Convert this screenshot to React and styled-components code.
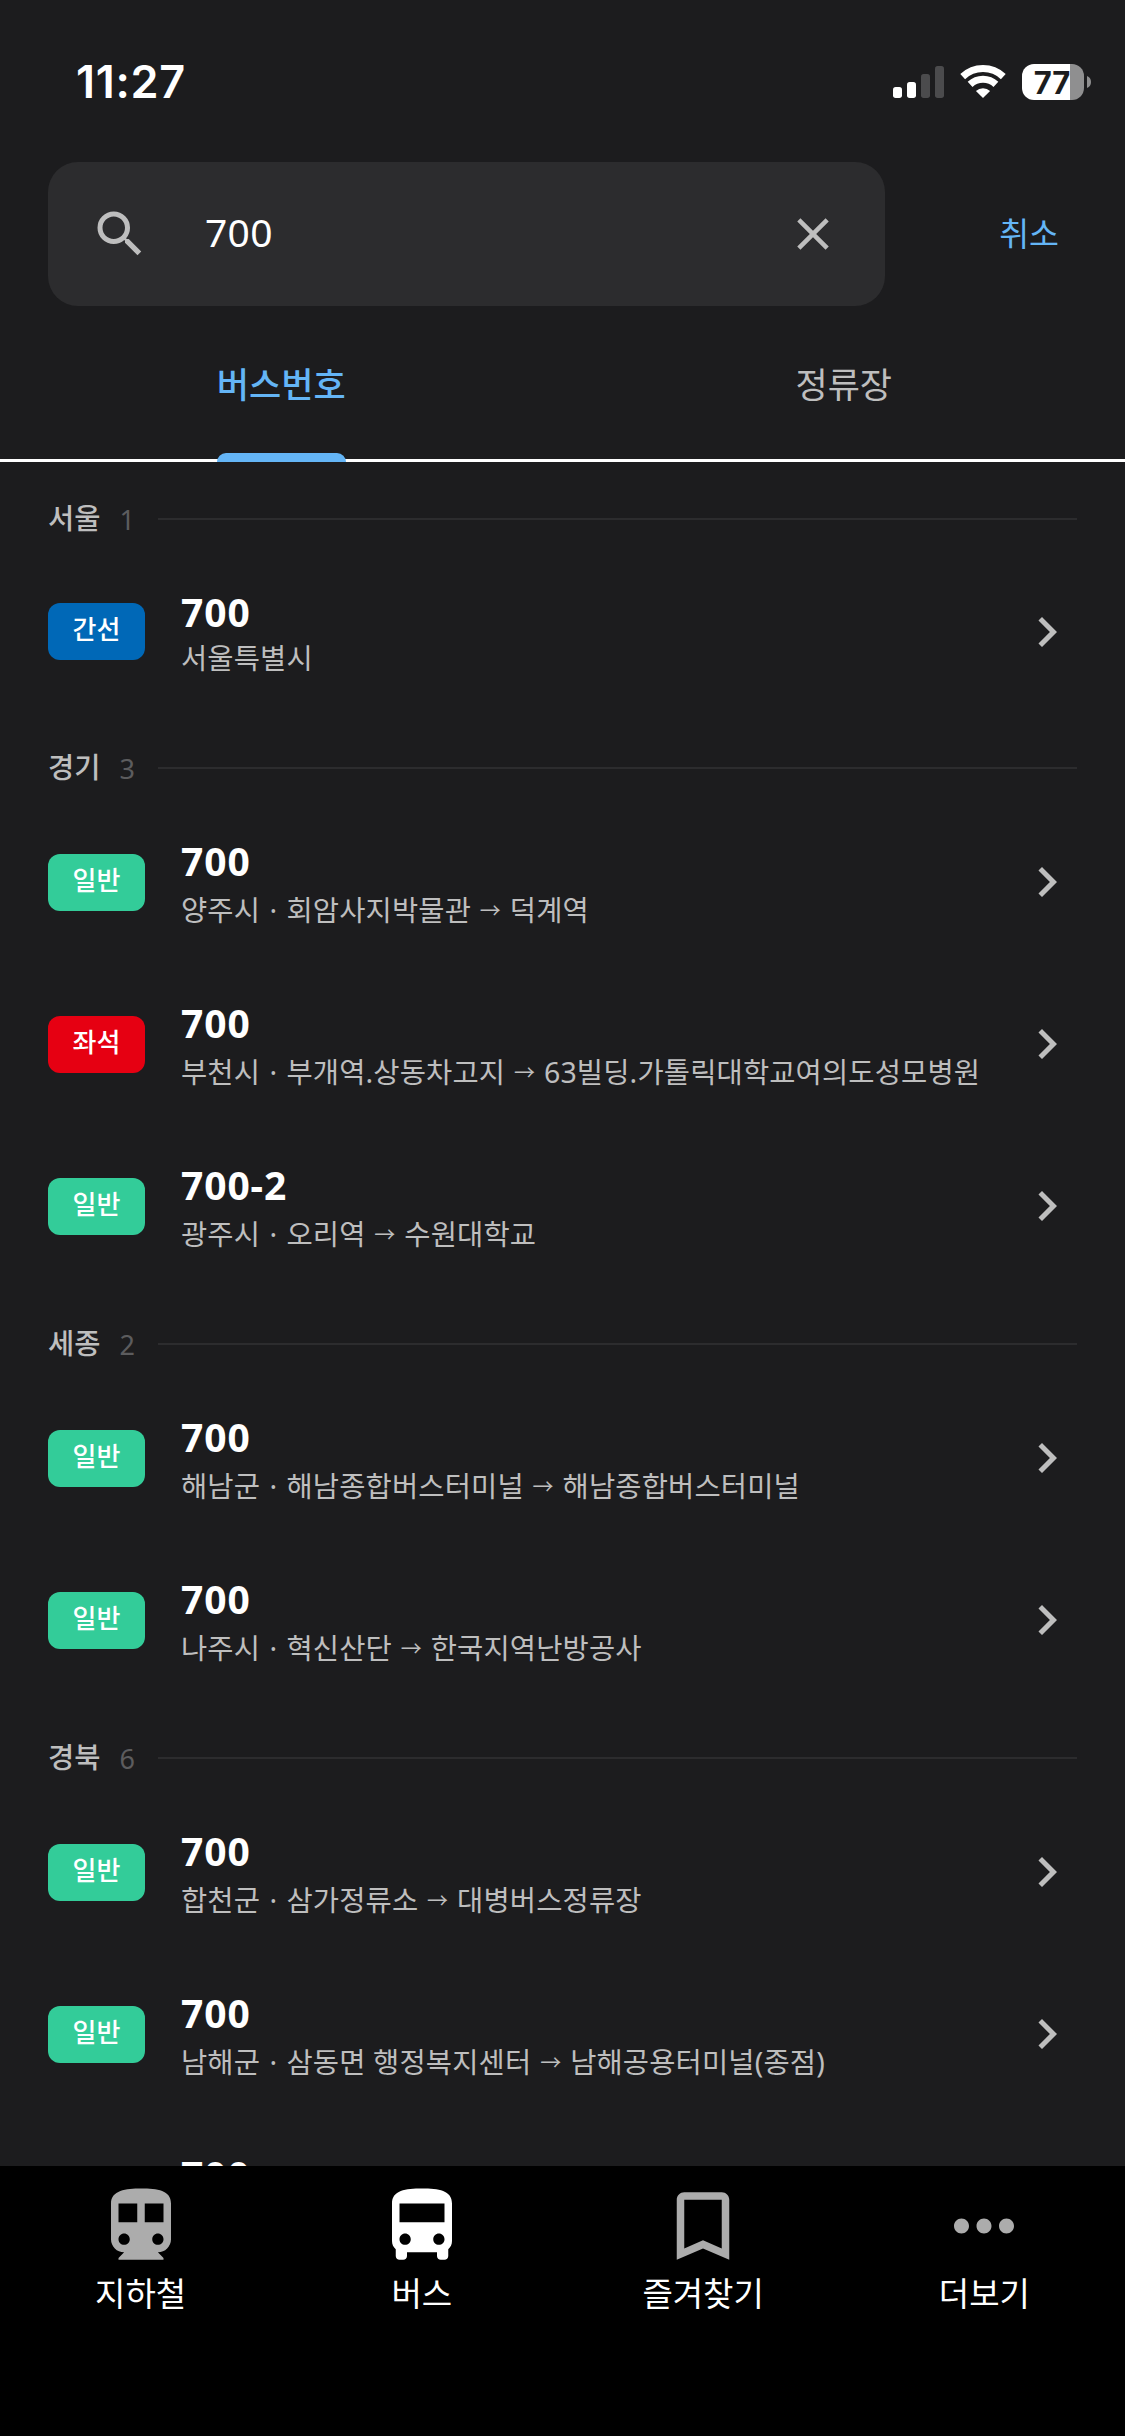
import React from 'react'
import styled, { createGlobalStyle } from 'styled-components'

const GlobalStyle = createGlobalStyle`
    * {
        box-sizing: border-box;
    }
    body {
        margin: 0;
        background: #1c1c1e;
        color: #fff;
        font-family: "Noto Sans", "Noto Sans CJK KR", sans-serif;
    }
`

const Screen = styled.div`
    width: 1125px;
    height: 2436px;
    display: flex;
    flex-direction: column;
    overflow: hidden;
    background: #1c1c1e;
`

const StatusBar = styled.div`
    height: 162px;
    flex: none;
    display: flex;
    justify-content: space-between;
    align-items: flex-start;
    padding: 54px 33px 0 76px;
`

const Clock = styled.div`
    font-family: Inter, sans-serif;
    font-size: 45px;
    font-weight: 600;
    line-height: 56px;
    letter-spacing: 0.7px;
`

const StatusIcons = styled.svg`
    width: 201px;
    height: 40px;
    margin-top: 8px;
`

const BatteryLevel = styled.text`
    fill: #1c1c1e;
    font-family: Inter, sans-serif;
    font-size: 31px;
    font-weight: 700;
    text-anchor: middle;
`

const SearchRow = styled.div`
    height: 144px;
    flex: none;
    display: flex;
    padding-left: 48px;
`

const SearchBox = styled.div`
    width: 837px;
    display: flex;
    align-items: center;
    padding: 0 45px 0 42px;
    border-radius: 30px;
    background: #2c2c2e;
`

const Query = styled.div`
    flex: 1;
    padding: 0 0 5px 55px;
    font-size: 39px;
    line-height: 52px;
    letter-spacing: 0.3px;
`

const Cancel = styled.div`
    flex: 1;
    display: flex;
    align-items: center;
    justify-content: flex-end;
    padding: 0 66px 4px 0;
    color: #64b5f6;
    font-size: 32.5px;
`

const Tabs = styled.div`
    height: 156px;
    flex: none;
    display: flex;
    border-bottom: 3px solid #fff;
`

const Tab = styled.div`
    flex: 1;
    height: 156px;
    display: flex;
    flex-direction: column;
    align-items: center;
    justify-content: space-between;
    padding-top: 53px;
    color: ${props => props.$active ? '#64b5f6' : '#bebebe'};
    font-size: 35px;
    font-weight: ${props => props.$active ? 500 : 400};
    line-height: 52px;
`

const Indicator = styled.div`
    width: 129px;
    height: 9px;
    border-radius: 9px 9px 0 0;
    background: #64b5f6;
`

const Results = styled.div`
    flex: 1;
    min-height: 0;
    overflow: hidden;
`

const RegionHeader = styled.div`
    height: 90px;
    display: flex;
    align-items: center;
    padding: 24px 48px 0;
`

const RegionName = styled.span`
    padding-bottom: 6px;
    color: #bebebe;
    font-size: 28.5px;
    font-weight: 500;
`

const RegionCount = styled.span`
    width: 39px;
    margin-left: 19px;
    color: #5c5c5e;
    font-size: 27px;
`

const Rule = styled.span`
    flex: 1;
    height: 2px;
    background: #2c2c2e;
`

const Row = styled.div`
    display: flex;
    align-items: center;
    padding: 0 48px;
`

const Badge = styled.div`
    width: 97px;
    height: 57px;
    margin-right: 36px;
    border-radius: 12px;
    background: ${props => props.$color};
    font-size: 26px;
    font-weight: 500;
    line-height: 53px;
    text-align: center;
`

const RouteInfo = styled.div`
    flex: 1;
    min-width: 0;
    padding: 36px 0 30px;
    white-space: pre;
`

const RouteNumber = styled.div`
    font-size: 39px;
    font-weight: 700;
    line-height: 48px;
    letter-spacing: 0.9px;
`

const RouteDetail = styled.div`
    padding: ${props => props.$tall ? '3px 0 1px' : '0 0 1px'};
    color: #bebebe;
    font-size: 28.5px;
    line-height: 44px;
    letter-spacing: 0.15px;
`

const Dot = styled.span`
    word-spacing: 1.7px;
`

const Arrow = styled.span`
    font-size: 21px;
    line-height: 1;
    vertical-align: 3px;
    word-spacing: 3.2px;
`

const TabBar = styled.div`
    height: 270px;
    flex: none;
    display: flex;
    background: #000;
`

const TabBarItem = styled.div`
    flex: 1;
    display: flex;
    flex-direction: column;
    align-items: center;
    padding-top: 15px;
    font-size: 33px;
    line-height: 46px;

    svg {
        width: 90px;
        height: 90px;
        fill: ${props => props.$active ? '#fff' : '#acacac'};
    }
`

const GREEN = '#33cc99'
const BLUE = '#0068b7'
const RED = '#e60012'

const regions = [
    { name: '서울', count: 1, routes: [
        { type: '간선', color: BLUE, number: '700', city: '서울특별시' },
    ] },
    { name: '경기', count: 3, routes: [
        { type: '일반', color: GREEN, number: '700', city: '양주시', from: '회암사지박물관', to: '덕계역' },
        { type: '좌석', color: RED, number: '700', city: '부천시', from: '부개역.상동차고지', to: '63빌딩.가톨릭대학교여의도성모병원' },
        { type: '일반', color: GREEN, number: '700-2', city: '광주시', from: '오리역', to: '수원대학교' },
    ] },
    { name: '세종', count: 2, routes: [
        { type: '일반', color: GREEN, number: '700', city: '해남군', from: '해남종합버스터미널', to: '해남종합버스터미널' },
        { type: '일반', color: GREEN, number: '700', city: '나주시', from: '혁신산단', to: '한국지역난방공사' },
    ] },
    { name: '경북', count: 6, routes: [
        { type: '일반', color: GREEN, number: '700', city: '합천군', from: '삼가정류소', to: '대병버스정류장' },
        { type: '일반', color: GREEN, number: '700', city: '남해군', from: '삼동면 행정복지센터', to: '남해공용터미널(종점)' },
        { number: '700' },
    ] },
]

const menu = [
    { label: '지하철', path: 'M12 2c-4 0-8 .5-8 4v9.5c0 1.93 1.57 3.5 3.5 3.5L6 20.5v.5h12v-.5L16.5 19c1.93 0 3.5-1.57 3.5-3.5V6c0-3.5-3.58-4-8-4zM7.5 17c-.83 0-1.5-.67-1.5-1.5S6.67 14 7.5 14s1.5.67 1.5 1.5S8.33 17 7.5 17zm3.5-6H6V6h5v5zm5.5 6c-.83 0-1.5-.67-1.5-1.5s.67-1.5 1.5-1.5 1.5.67 1.5 1.5-.67 1.5-1.5 1.5zm1.5-6h-5V6h5v5z' },
    { label: '버스', active: true, path: 'M4 16c0 .88.39 1.67 1 2.22V20c0 .55.45 1 1 1h1c.55 0 1-.45 1-1v-1h8v1c0 .55.45 1 1 1h1c.55 0 1-.45 1-1v-1.78c.61-.55 1-1.34 1-2.22V6c0-3.5-3.58-4-8-4s-8 .5-8 4v10zm3.5 1c-.83 0-1.5-.67-1.5-1.5S6.67 14 7.5 14s1.5.67 1.5 1.5S8.33 17 7.5 17zm9 0c-.83 0-1.5-.67-1.5-1.5s.67-1.5 1.5-1.5 1.5.67 1.5 1.5-.67 1.5-1.5 1.5zm1.5-6H6V6h12v5z' },
    { label: '즐겨찾기', path: 'M17 3H7c-1.1 0-2 .9-2 2v16l7-3 7 3V5c0-1.1-.9-2-2-2zm0 15l-5-2.18L7 18V5h10v13z' },
    { label: '더보기', path: 'M6 10c-1.1 0-2 .9-2 2s.9 2 2 2 2-.9 2-2-.9-2-2-2zm12 0c-1.1 0-2 .9-2 2s.9 2 2 2 2-.9 2-2-.9-2-2-2zm-6 0c-1.1 0-2 .9-2 2s.9 2 2 2 2-.9 2-2-.9-2-2-2z' },
]

const Status = () => (
    <StatusBar>
        <Clock>11:27</Clock>
        <StatusIcons viewBox="0 0 201 40">
            <rect x="2" y="25" width="9" height="11" rx="2.7" fill="#fff" />
            <rect x="16" y="20" width="9" height="16" rx="2.7" fill="#fff" />
            <rect x="30" y="12" width="9" height="24" rx="2.7" fill="#4b4b4d" />
            <rect x="44" y="4" width="9" height="32" rx="2.7" fill="#4b4b4d" />
            <g fill="none" stroke="#fff" strokeWidth="7">
                <path d="M71.7 14.6A29.5 29.5 0 0 1 112.3 14.6" />
                <path d="M79.1 22.4A18.7 18.7 0 0 1 104.9 22.4" />
            </g>
            <path d="M92 36L84.9 29A10.3 10.3 0 0 1 99.1 29z" fill="#fff" />
            <path d="M143 2H179V38H143A12 12 0 0 1 131 26V14A12 12 0 0 1 143 2z" fill="#fff" />
            <path d="M179 2H181A12 12 0 0 1 193 14V26A12 12 0 0 1 181 38H179z" fill="#8f8f90" />
            <path d="M196 14A6.5 6.5 0 0 1 196 26z" fill="#8f8f90" />
            <BatteryLevel x="161" y="31.5">77</BatteryLevel>
        </StatusIcons>
    </StatusBar>
)

const Route = ({ route }) => (
    <Row>
        <Badge $color={route.color}>{route.type}</Badge>
        <RouteInfo>
            <RouteNumber>{route.number}</RouteNumber>
            {route.city && (
                <RouteDetail $tall={Boolean(route.to)}>
                    {route.city}
                    {route.to && <><Dot> · </Dot>{route.from}<Arrow> → </Arrow>{route.to}</>}
                </RouteDetail>
            )}
        </RouteInfo>
        {route.city && (
            <svg width="60" height="60" viewBox="0 0 24 24" fill="#bebebe">
                <path d="M10 6L8.59 7.41 13.17 12l-4.58 4.59L10 18l6-6z" />
            </svg>
        )}
    </Row>
)

const App = () => {
    return (
        <Screen lang="ko">
            <GlobalStyle />
            <Status />
            <SearchRow>
                <SearchBox>
                    <svg width="60" height="60" viewBox="0 0 24 24" fill="#bebebe">
                        <path d="M15.5 14h-.79l-.28-.27A6.471 6.471 0 0 0 16 9.5 6.5 6.5 0 1 0 9.5 16c1.61 0 3.09-.59 4.23-1.57l.27.28v.79l5 4.99L20.49 19l-4.99-5zm-6 0C7.01 14 5 11.99 5 9.5S7.01 5 9.5 5 14 7.01 14 9.5 11.99 14 9.5 14z" />
                    </svg>
                    <Query>700</Query>
                    <svg width="54" height="54" viewBox="0 0 24 24" fill="#bebebe">
                        <path d="M19 6.41L17.59 5 12 10.59 6.41 5 5 6.41 10.59 12 5 17.59 6.41 19 12 13.41 17.59 19 19 17.59 13.41 12z" />
                    </svg>
                </SearchBox>
                <Cancel>취소</Cancel>
            </SearchRow>
            <Tabs>
                <Tab $active>버스번호<Indicator /></Tab>
                <Tab>정류장</Tab>
            </Tabs>
            <Results>
                {regions.map(region => (
                    <section key={region.name}>
                        <RegionHeader>
                            <RegionName>{region.name}</RegionName>
                            <RegionCount>{region.count}</RegionCount>
                            <Rule />
                        </RegionHeader>
                        {region.routes.map((route, i) => <Route key={i} route={route} />)}
                    </section>
                ))}
            </Results>
            <TabBar>
                {menu.map(item => (
                    <TabBarItem key={item.label} $active={item.active}>
                        <svg viewBox="0 0 24 24"><path d={item.path} /></svg>
                        {item.label}
                    </TabBarItem>
                ))}
            </TabBar>
        </Screen>
    )
}

export default App
